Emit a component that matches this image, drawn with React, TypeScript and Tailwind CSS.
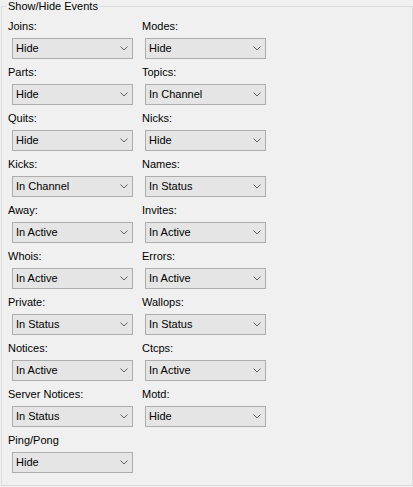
import React from "react";

type EventRow = { label: string; value: string };

const left: EventRow[] = [
    { label: "Joins:", value: "Hide" },
    { label: "Parts:", value: "Hide" },
    { label: "Quits:", value: "Hide" },
    { label: "Kicks:", value: "In Channel" },
    { label: "Away:", value: "In Active" },
    { label: "Whois:", value: "In Active" },
    { label: "Private:", value: "In Status" },
    { label: "Notices:", value: "In Active" },
    { label: "Server Notices:", value: "In Status" },
    { label: "Ping/Pong", value: "Hide" },
];

const right: EventRow[] = [
    { label: "Modes:", value: "Hide" },
    { label: "Topics:", value: "In Channel" },
    { label: "Nicks:", value: "Hide" },
    { label: "Names:", value: "In Status" },
    { label: "Invites:", value: "In Active" },
    { label: "Errors:", value: "In Active" },
    { label: "Wallops:", value: "In Status" },
    { label: "Ctcps:", value: "In Active" },
    { label: "Motd:", value: "Hide" },
];

function Combo({ value }: { value: string }) {
    return (
        <div className="flex items-center justify-between h-[21px] w-[121px] border border-[#adadad] bg-[#e5e5e5] pl-[3px] pr-[4px] text-black">
            <span>{value}</span>
            <svg width="8" height="5" viewBox="0 0 8 5" className="text-[#606060]">
                <path d="M0.5 0.5 L4 4 L7.5 0.5" fill="none" stroke="currentColor" strokeWidth="1" />
            </svg>
        </div>
    );
}

function Field({ row, col }: { row: EventRow; col: 0 | 1 }) {
    return (
        <div className="flex flex-col h-[46px]">
            <div className="h-[14px] leading-[14px] text-black">{row.label}</div>
            <div className={col === 0 ? "mt-[5px] ml-[4px]" : "mt-[5px] ml-[3px]"}>
                <Combo value={row.value} />
            </div>
        </div>
    );
}

export default function App() {
    return (
        <div
            className="w-[413px] h-[487px] bg-[#f0f0f0] text-[11px]"
            style={{ fontFamily: '"Liberation Sans", Arial, sans-serif' }}
        >
            <fieldset className="ml-[1px] w-[412px] h-[486px] border border-[#dcdcdc] pl-[6px] pt-[6px]">
                <legend className="-ml-[1px] px-[1px] leading-[13px] text-black">Show/Hide Events</legend>
                <div className="grid grid-cols-[134px_134px]">
                    <div className="flex flex-col">
                        {left.map((r) => (
                            <Field key={r.label} row={r} col={0} />
                        ))}
                    </div>
                    <div className="flex flex-col">
                        {right.map((r) => (
                            <Field key={r.label} row={r} col={1} />
                        ))}
                    </div>
                </div>
            </fieldset>
        </div>
    );
}
